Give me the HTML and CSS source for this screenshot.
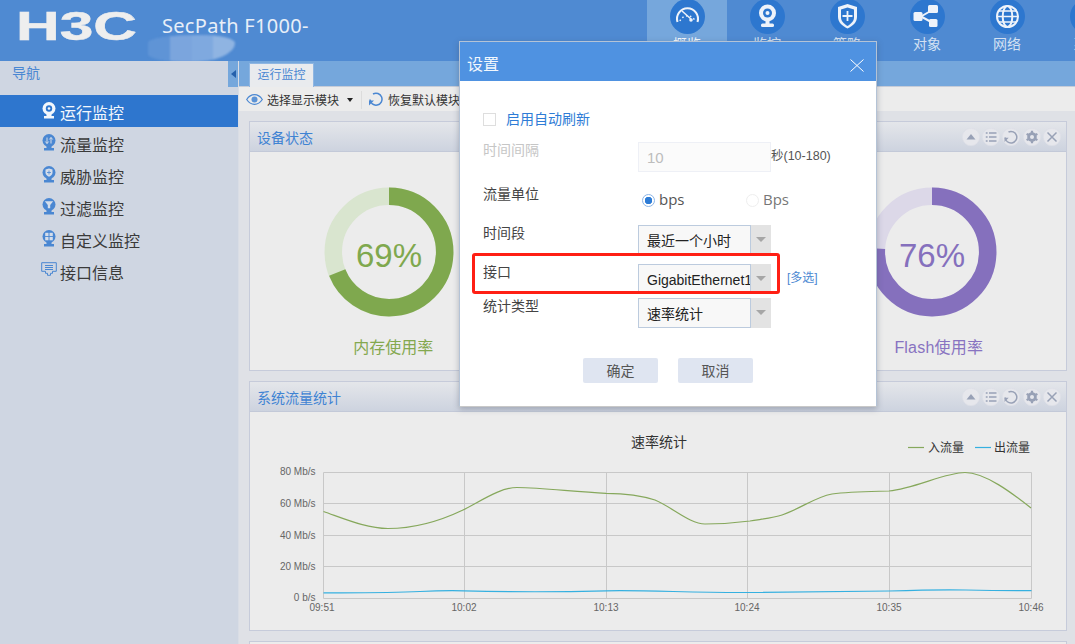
FILE: index.html
```html
<!DOCTYPE html>
<html lang="zh-CN">
<head>
<meta charset="utf-8">
<title>SecPath F1000</title>
<link rel="stylesheet" href="styles.css">
</head>
<body>
<div class="app">
  <header class="top">
    <div class="brand">
      <svg class="logo" viewBox="0 0 117 29" role="img" aria-label="H3C"><text x="-3" y="28" textLength="121" lengthAdjust="spacingAndGlyphs" class="logo-text">H3C</text></svg>
      <span class="product">SecPath F1000-</span>
      <div class="smudge"><i></i><i></i><i></i><i></i></div>
    </div>
    <nav class="mainnav">
      <a class="navitem active">
        <svg class="navicon" viewBox="0 0 35 35"><circle cx="17.5" cy="17.5" r="17.5" class="disc"/><path d="M7.500 23a10.500 10.500 0 1 1 20 0" class="ln"/><path d="M10 22a8 8 0 0 1 15 0" class="ln thin dashed"/><path d="M12 12l9 8" class="ln thin"/><circle cx="21" cy="21" r="1.800" class="dot"/></svg>
        <span>概览</span>
      </a>
      <a class="navitem">
        <svg class="navicon" viewBox="0 0 35 35"><circle cx="17.5" cy="17.5" r="17.5" class="disc"/><circle cx="17.5" cy="14" r="8.500" class="dot"/><circle cx="17.5" cy="14" r="4.500" class="hole"/><circle cx="17.5" cy="14" r="2" class="dot"/><rect x="11" y="24.500" width="13" height="3.500" rx="1.500" class="dot"/><rect x="15.500" y="21" width="4" height="4" class="dot"/></svg>
        <span>监控</span>
      </a>
      <a class="navitem">
        <svg class="navicon" viewBox="0 0 35 35"><circle cx="17.5" cy="17.5" r="17.5" class="disc"/><path d="M17.500 5l9.500 3v10c0 5-4 9-9.500 11.500C12 27 8 23 8 18V8z" class="dot"/><path d="M17.500 8.500l6.500 2v8c0 3.500-3 6.500-6.500 8.500-3.500-2-6.500-5-6.500-8.500v-8z" class="hole"/><path d="M17.500 12v10M12.500 17h10" class="ln plus"/></svg>
        <span>策略</span>
      </a>
      <a class="navitem">
        <svg class="navicon" viewBox="0 0 35 35"><circle cx="17.5" cy="17.5" r="17.500" class="disc"/><path d="M11 17.500L24 10M11 17.500l13 7" class="ln"/><rect x="3.500" y="13" width="9" height="9" rx="1.500" class="dot"/><rect x="18" y="6" width="10" height="8" rx="1.500" class="dot"/><rect x="19" y="20" width="8.500" height="8" rx="1.500" class="dot"/></svg>
        <span>对象</span>
      </a>
      <a class="navitem">
        <svg class="navicon" viewBox="0 0 35 35"><circle cx="17.5" cy="17.5" r="17.500" class="disc"/><circle cx="17.500" cy="17.500" r="10.500" class="ln"/><ellipse cx="17.500" cy="17.500" rx="4.800" ry="10.500" class="ln"/><path d="M7 17.500h21M8.800 12h17.400M8.800 23h17.400" class="ln thin"/></svg>
        <span>网络</span>
      </a>
      <a class="navitem">
        <svg class="navicon" viewBox="0 0 35 35"><circle cx="17.5" cy="17.5" r="17.500" class="disc"/></svg>
        <span>系统</span>
      </a>
    </nav>
  </header>

  <div class="workspace">
    <aside class="side">
      <div class="side-head">
        <span>导航</span>
        <button class="collapse" aria-label="收起"><i></i></button>
      </div>
      <ul class="menu">
        <li class="menu-item current">
          <svg class="mi" viewBox="0 0 14 17"><circle cx="7" cy="6.500" r="6.500" class="mi-fill"/><circle cx="7" cy="6.500" r="3.200" class="mi-hole"/><circle cx="7" cy="6.500" r="1.300" class="mi-fill"/><rect x="2" y="14" width="10" height="2.500" class="mi-fill"/><rect x="4.500" y="12" width="5" height="3" class="mi-fill"/></svg>
          运行监控</li>
        <li class="menu-item">
          <svg class="mi" viewBox="0 0 14 17"><circle cx="7" cy="6.500" r="6.500" class="mi-fill"/><path d="M5 3.500v6M3.300 7.500L5 9.500l1.700-2M9 9.500v-6M7.300 5.500L9 3.500l1.700 2" class="mi-line"/><rect x="2" y="14" width="10" height="2.500" class="mi-fill"/><rect x="4.500" y="12" width="5" height="3" class="mi-fill"/></svg>
          流量监控</li>
        <li class="menu-item">
          <svg class="mi" viewBox="0 0 14 17"><circle cx="7" cy="6.500" r="6.500" class="mi-fill"/><path d="M7 2.500l3.500 1v3.200c0 1.800-1.500 3-3.500 4-2-1-3.500-2.200-3.500-4V3.500z" class="mi-hole"/><path d="M7 4.500v4M5 6.500h4" class="mi-fine"/><rect x="2" y="14" width="10" height="2.500" class="mi-fill"/><rect x="4.500" y="12" width="5" height="3" class="mi-fill"/></svg>
          威胁监控</li>
        <li class="menu-item">
          <svg class="mi" viewBox="0 0 14 17"><circle cx="7" cy="6.500" r="6.500" class="mi-fill"/><path d="M2.800 3.300h8.400L8.200 7v3.200H5.800V7z" class="mi-hole"/><rect x="2" y="14" width="10" height="2.500" class="mi-fill"/><rect x="4.500" y="12" width="5" height="3" class="mi-fill"/></svg>
          过滤监控</li>
        <li class="menu-item">
          <svg class="mi" viewBox="0 0 14 17"><circle cx="7" cy="6.500" r="6.500" class="mi-fill"/><rect x="3.200" y="2.800" width="3.300" height="3.300" class="mi-hole"/><rect x="7.500" y="2.800" width="3.300" height="3.300" class="mi-hole"/><rect x="3.200" y="7" width="3.300" height="3.300" class="mi-hole"/><rect x="7.500" y="7" width="3.300" height="3.300" class="mi-hole"/><rect x="2" y="14" width="10" height="2.500" class="mi-fill"/><rect x="4.500" y="12" width="5" height="3" class="mi-fill"/></svg>
          自定义监控</li>
        <li class="menu-item">
          <svg class="mi wide" viewBox="0 0 16 14"><path d="M.7.700h14.600v8.600h-3.800v2h-2v2h-3v-2h-2v-2H.7z" class="mi-outline"/><path d="M4 3.500h8M4 5.500h8M4 7.500h8" class="mi-outline"/></svg>
          接口信息</li>
      </ul>
    </aside>

    <main class="content">
      <div class="tabs"><span class="tab">运行监控</span></div>
      <div class="toolbar">
        <svg class="tool-eye" viewBox="0 0 17 11"><path d="M.7 5.500C3 2 5.500.7 8.500.7s5.500 1.300 7.800 4.800c-2.300 3.500-4.800 4.800-7.800 4.800S3 9 .7 5.500z" class="eye-line"/><circle cx="8.500" cy="5.500" r="3" class="eye-fill"/></svg>
        <span class="tool-text">选择显示模块</span>
        <i class="caret"></i>
        <i class="tool-sep"></i>
        <svg class="tool-redo" viewBox="0 0 15 15"><path d="M5 2A6 6 0 1 1 2 7.500" class="redo-line"/><path d="M1 13.500V8.500h5z" class="redo-fill"/></svg>
        <span class="tool-text">恢复默认模块</span>
      </div>
      <div class="panels">
        <section class="panel">
          <div class="panel-head">
            <h2>设备状态</h2>
            <div class="panel-tools">
              <svg class="pt" viewBox="0 0 18 18"><circle cx="9" cy="9" r="8.700" class="pt-bg"/><path d="M4.500 11.500L9 6l4.500 5.500z" class="pt-fill"/></svg>
              <svg class="pt" viewBox="0 0 18 18"><circle cx="9" cy="9" r="8.700" class="pt-bg"/><path d="M7 5h7.500M7 9h7.500M7 13h7.500M3.800 5h1.800M3.800 9h1.800M3.800 13h1.800" class="pt-line"/></svg>
              <svg class="pt" viewBox="0 0 18 18"><circle cx="9" cy="9" r="8.700" class="pt-bg"/><path d="M6.500 4a5.800 5.800 0 1 1-3.300 5.500" class="pt-line"/><path d="M2.500 14V9.800h4.200z" class="pt-fill"/></svg>
              <svg class="pt" viewBox="0 0 18 18"><circle cx="9" cy="9" r="8.700" class="pt-bg"/><circle cx="9" cy="9" r="4.800" class="pt-gear"/><path d="M9 2.800v12.400M3.600 5.900l10.800 6.200M14.400 5.900L3.600 12.100" class="pt-teeth"/><circle cx="9" cy="9" r="2" class="pt-bgdot"/></svg>
              <svg class="pt" viewBox="0 0 18 18"><circle cx="9" cy="9" r="8.700" class="pt-bg"/><path d="M4.500 4.500l9 9M13.500 4.500l-9 9" class="pt-line"/></svg>
            </div>
          </div>
          <div class="gauges">
            <figure class="gauge gauge-green">
              <svg class="ring" viewBox="0 0 130 130"><circle cx="65" cy="65" r="55.700" class="ring-track"/><circle cx="65" cy="65" r="55.700" class="ring-value" pathLength="100" stroke-dasharray="69 31"/><text x="65" y="80" class="ring-text">69%</text></svg>
              <figcaption>内存使用率</figcaption>
            </figure>
            <figure class="gauge gauge-purple">
              <svg class="ring" viewBox="0 0 130 130"><circle cx="65" cy="65" r="55.700" class="ring-track"/><circle cx="65" cy="65" r="55.700" class="ring-value" pathLength="100" stroke-dasharray="76 24"/><text x="65" y="80" class="ring-text">76%</text></svg>
              <figcaption>Flash使用率</figcaption>
            </figure>
          </div>
        </section>

        <section class="panel">
          <div class="panel-head">
            <h2>系统流量统计</h2>
            <div class="panel-tools">
              <svg class="pt" viewBox="0 0 18 18"><circle cx="9" cy="9" r="8.700" class="pt-bg"/><path d="M4.500 11.500L9 6l4.500 5.500z" class="pt-fill"/></svg>
              <svg class="pt" viewBox="0 0 18 18"><circle cx="9" cy="9" r="8.700" class="pt-bg"/><path d="M7 5h7.500M7 9h7.500M7 13h7.500M3.800 5h1.800M3.800 9h1.800M3.800 13h1.800" class="pt-line"/></svg>
              <svg class="pt" viewBox="0 0 18 18"><circle cx="9" cy="9" r="8.700" class="pt-bg"/><path d="M6.500 4a5.800 5.800 0 1 1-3.300 5.500" class="pt-line"/><path d="M2.500 14V9.800h4.200z" class="pt-fill"/></svg>
              <svg class="pt" viewBox="0 0 18 18"><circle cx="9" cy="9" r="8.700" class="pt-bg"/><circle cx="9" cy="9" r="4.800" class="pt-gear"/><path d="M9 2.800v12.400M3.600 5.900l10.800 6.200M14.400 5.900L3.600 12.100" class="pt-teeth"/><circle cx="9" cy="9" r="2" class="pt-bgdot"/></svg>
              <svg class="pt" viewBox="0 0 18 18"><circle cx="9" cy="9" r="8.700" class="pt-bg"/><path d="M4.500 4.500l9 9M13.500 4.500l-9 9" class="pt-line"/></svg>
            </div>
          </div>
          <svg class="chart" viewBox="250 412 816 218">
            <text x="659" y="447" class="c-title">速率统计</text>
            <path d="M908 447.500h16" class="c-green"/><text x="928" y="452" class="c-legend">入流量</text>
            <path d="M975 447.500h16" class="c-blue"/><text x="994" y="452" class="c-legend">出流量</text>
            <path d="M323.500 472.500H1031.500V598.500H323.500zM323.500 503.500H1031.500M323.500 535.500H1031.500M323.500 566.500H1031.500M464.500 472.500V598.500M606.500 472.500V598.500M747.500 472.500V598.500M889.500 472.500V598.500" class="c-grid"/>
            <path d="M323.500 511.500C345 519 367 528.500 388 528.500C415 528.500 440 521 463 510C481 501 500 487.500 517 487.500C545 488 575 492 606 493.300C625 493.500 640 495 655 500C672 507 690 524 705 524C722 524 735 523 750 521C762 519 773 518 782 515C800 509 815 497 832 494C850 491.500 870 491.500 889 491C915 488.500 945 472.500 965 472.500C985 472.500 1012 493 1031 508" class="c-green"/>
            <path d="M323.500 592.800C370 592.800 390 593 420 591.500C440 590.500 450 590.500 464 590.800C510 592 560 592 606 590.800C650 590 690 592.800 747 592.500C800 592 850 591.500 889 591C920 590 945 589.500 966 590C990 590.500 1010 590.700 1031.500 590.700" class="c-blue"/>
            <g class="c-axis">
              <text x="315.500" y="475">80 Mb/s</text>
              <text x="315.500" y="506.500">60 Mb/s</text>
              <text x="315.500" y="538.500">40 Mb/s</text>
              <text x="315.500" y="569.500">20 Mb/s</text>
              <text x="315.500" y="601">0 b/s</text>
            </g>
            <g class="c-times">
              <text x="322" y="611">09:51</text>
              <text x="464" y="611">10:02</text>
              <text x="606" y="611">10:13</text>
              <text x="747" y="611">10:24</text>
              <text x="889" y="611">10:35</text>
              <text x="1031" y="611">10:46</text>
            </g>
          </svg>
        </section>
        <section class="panel panel-next"></section>
      </div>
    </main>
  </div>

  <div class="dialog" role="dialog" aria-label="设置">
    <div class="dialog-head">
      <span>设置</span>
      <svg class="dialog-x" viewBox="0 0 14 13"><path d="M.5.500l13 12M13.500.500l-13 12"/></svg>
    </div>
    <form class="dialog-body">
      <label class="check-row"><i class="check"></i><span class="check-text">启用自动刷新</span></label>
      <div class="row row-interval">
        <span class="lab disabled">时间间隔</span>
        <span class="input">10</span>
        <span class="unit">秒(10-180)</span>
      </div>
      <div class="row row-unit">
        <span class="lab">流量单位</span>
        <div class="radios">
          <span class="radio-item on"><i class="radio"></i>bps</span>
          <span class="radio-item"><i class="radio"></i>Bps</span>
        </div>
      </div>
      <div class="row row-time">
        <span class="lab">时间段</span>
        <div class="select"><span class="sel-text">最近一个小时</span><i class="sel-btn"></i></div>
      </div>
      <div class="row row-iface">
        <span class="lab">接口</span>
        <div class="select"><span class="sel-text">GigabitEthernet1/0/1</span><i class="sel-btn"></i></div>
        <a class="multi">[多选]</a>
      </div>
      <div class="row row-kind">
        <span class="lab">统计类型</span>
        <div class="select"><span class="sel-text">速率统计</span><i class="sel-btn"></i></div>
      </div>
      <div class="actions">
        <span class="btn">确定</span>
        <span class="btn">取消</span>
      </div>
    </form>
    <div class="highlight"></div>
  </div>
</div>
</body>
</html>
```

FILE: styles.css
```css
* { box-sizing: border-box; }
html, body { margin: 0; padding: 0; }
body {
  width: 1075px;
  height: 644px;
  overflow: hidden;
  font-family: "Liberation Sans", "Noto Sans CJK SC", sans-serif;
  background: #dfe1e6;
  color: #333;
}
.app { position: relative; width: 1075px; height: 644px; overflow: hidden; }

/* header */
.top { display: flex; height: 61px; background: #4f8ad2; overflow: hidden; }
.brand { position: relative; flex: none; width: 647px; display: flex; align-items: flex-start; padding: 12px 0 0 19px; }
.logo { width: 117px; height: 29px; flex: none; overflow: visible; }
.logo-text { font-family: "Liberation Sans", sans-serif; font-weight: 700; font-size: 41px; fill: #eeeeee; stroke: #eeeeee; stroke-width: .5; }
.product { margin: 0 0 0 26px; font-family: "Noto Sans", sans-serif; font-size: 20px; line-height: 28px; color: #e8eff8; letter-spacing: .3px; }
.smudge { position: absolute; left: 148px; top: 35px; width: 87px; height: 27px; display: flex; align-items: stretch; background: #6f9fda; border-radius: 60% 40% 50% 50% / 30% 30% 70% 30%; filter: blur(1px); overflow: hidden; }
.smudge i { flex: 1; }
.smudge i:nth-child(1) { background: #5f94d6; }
.smudge i:nth-child(2) { background: #7ba5dd; }
.smudge i:nth-child(3) { background: #7fa9df; }
.smudge i:nth-child(4) { background: #8fb4e2; }
.mainnav { flex: none; display: flex; }
.navitem { flex: none; width: 80px; height: 61px; display: flex; flex-direction: column; align-items: center; color: #d3e1f2; font-size: 14px; line-height: 20px; }
.navitem.active { background: #76a7dc; color: #f4f8fc; }
.navicon { width: 35px; height: 35px; margin-top: -1px; flex: none; }
.disc { fill: #2d77cf; }
.dot { fill: #eef3fa; }
.hole { fill: #2d77cf; }
.ln { fill: none; stroke: #eef3fa; stroke-width: 2; }
.ln.thin { stroke-width: 1.500; }
.ln.dashed { stroke-dasharray: 1.500 2.500; }
.ln.plus { stroke: #eef3fa; stroke-width: 1.800; }

/* layout */
.workspace { display: flex; height: 583px; }
.side { flex: none; width: 239px; background: #cfd6e2; border-right: 1px solid #d9dde5; }
.side-head { display: flex; align-items: flex-start; justify-content: space-between; height: 26px; font-size: 14px; line-height: 24px; color: #4a87d2; padding-left: 12px; background: #cfd6e2; }
.collapse { width: 10px; height: 26px; padding: 0; border: 0; background: #75a7dc; display: flex; align-items: center; justify-content: center; }
.collapse i { width: 0; height: 0; border: 4px solid transparent; border-left-width: 0; border-right: 5px solid #2460ab; }
.menu { list-style: none; margin: 8px 0 0; padding: 0; }
.menu-item { display: flex; align-items: center; height: 32px; padding: 1px 0 0 42px; font-size: 16px; color: #3a3a3a; }
.menu-item.current { background: #2e76ce; color: #f3f7fc; }
.mi { width: 14px; height: 17px; margin-right: 4px; flex: none; margin-top: -3px; }
.mi.wide { width: 16px; height: 14px; margin-left: -1px; margin-right: 3px; margin-top: -6px; }
.mi-fill { fill: #4a87d2; }
.mi-hole { fill: #d6deea; }
.mi-line { fill: none; stroke: #d6deea; stroke-width: 1; }
.mi-fine { fill: none; stroke: #4a87d2; stroke-width: .8; }
.mi-outline { fill: none; stroke: #4a87d2; stroke-width: 1; }
.current .mi-fill { fill: #f3f7fc; }
.current .mi-hole { fill: #2e76ce; }

.content { flex: 1; min-width: 0; display: flex; flex-direction: column; overflow: hidden; }
.tabs { flex: none; height: 26px; background: #75a7dc; padding: 2px 0 0 10px; border-bottom: 1px solid #c6ccd8; }
.tab { display: block; width: 65px; height: 24px; background: #e9ebee; border: 1px solid #8fb6e2; border-bottom: 0; color: #4a87d2; font-size: 12px; line-height: 22px; text-align: center; }
.toolbar { flex: none; display: flex; align-items: center; height: 24px; background: #ececec; padding: 1px 0 0 7px; font-size: 12px; color: #333; }
.tool-eye { width: 17px; height: 11px; margin-right: 4px; }
.eye-line { fill: none; stroke: #4a87d2; stroke-width: 1.200; }
.eye-fill { fill: #5b93d6; }
.caret { width: 0; height: 0; margin: 1px 0 0 8px; border: 3px solid transparent; border-bottom: 0; border-top: 4px solid #222; }
.tool-sep { width: 1px; height: 18px; background: #dcdcdc; margin: 0 6px 0 8px; }
.tool-redo { width: 15px; height: 15px; margin-right: 5px; }
.redo-line { fill: none; stroke: #4a87d2; stroke-width: 1.500; }
.redo-fill { fill: #4a87d2; }

.panels { flex: none; padding: 10px 8px 0 10px; display: flex; flex-direction: column; gap: 10px; }
.panel { flex: none; height: 250px; border: 1px solid #c6cbda; background: #ececec; }
.panel-next { height: 30px; }
.panel-head { display: flex; align-items: center; justify-content: space-between; height: 30px; padding: 0 5px 0 7px; border-bottom: 1px solid #c3c9d8; background: linear-gradient(#e4e6ea, #cdd3df); }
.panel-head h2 { margin: 0; font-size: 14px; font-weight: 400; color: #3f83d3; }
.panel-tools { display: flex; gap: 2.300px; }
.pt { width: 18px; height: 18px; flex: none; }
.pt-bg { fill: #e6e7ec; stroke: #dcdee6; stroke-width: .6; }
.pt-fill { fill: #98a1b6; }
.pt-line { fill: none; stroke: #98a1b6; stroke-width: 1.500; }
.pt-gear { fill: #98a1b6; }
.pt-teeth { fill: none; stroke: #98a1b6; stroke-width: 2.200; }
.pt-bgdot { fill: #e6e7ec; }

.gauges { display: grid; grid-template-columns: 271.300px 271.300px 271.300px; padding: 34.700px 0 0 3.500px; }
.gauge { margin: 0; display: flex; flex-direction: column; align-items: center; }
.gauge-purple { grid-column: 3; }
.ring { width: 130px; height: 130px; display: block; }
.ring-track, .ring-value { fill: none; stroke-width: 17.500; }
.ring-value { transform: rotate(-90deg); transform-origin: 65px 65px; }
.ring-text { font-size: 33px; text-anchor: middle; }
.gauge figcaption { margin-top: 21px; font-size: 16px; line-height: 20px; }
.gauge-green figcaption { padding-left: 8px; color: #84a84f; }
.gauge-purple figcaption { padding-left: 14px; letter-spacing: .2px; color: #8873c1; }
.gauge-green .ring-track { stroke: #d9e5cf; }
.gauge-green .ring-value { stroke: #7fa84e; }
.gauge-green .ring-text { fill: #7fa84e; }
.gauge-purple .ring-track { stroke: #dcd8e8; }
.gauge-purple .ring-value { stroke: #8570bd; }
.gauge-purple .ring-text { fill: #8570bd; }

.chart { display: block; width: 816px; height: 218px; }
.c-title { font-size: 14px; text-anchor: middle; fill: #333; }
.c-legend { font-size: 12px; fill: #333; }
.c-grid { fill: none; stroke: #c8c8c8; stroke-width: 1; }
.c-green { fill: none; stroke: #86a85c; stroke-width: 1.200; }
.c-blue { fill: none; stroke: #35b0e0; stroke-width: 1.200; }
.c-axis text { font-size: 10px; fill: #666; text-anchor: end; }
.c-times text { font-size: 10px; fill: #666; text-anchor: middle; }

/* dialog */
.dialog { position: absolute; left: 459px; top: 41px; width: 418px; height: 366px; background: #fff; border: 1px solid #b4c3d6; border-bottom-color: #c8c8c8; box-shadow: 0 2px 6px rgba(60, 70, 90, .35); }
.dialog-head { display: flex; align-items: center; justify-content: space-between; height: 39px; padding: 3px 12px 0 7px; background: #4f92e1; color: #f2f7fd; font-size: 16px; }
.dialog-x { width: 14px; height: 13px; margin-top: 5px; }
.dialog-x path { fill: none; stroke: #fff; stroke-width: 1; }
.dialog-body { display: block; padding: 27px 0 0 23px; font-size: 14px; }
.check-row { display: flex; align-items: center; height: 21px; margin-bottom: 13px; color: #2e7cd6; }
.check { width: 13px; height: 13px; border: 1px solid #dedede; margin: 2px 10px 0 0; background: #fff; }
.check-text { margin-top: -2px; }
.row { display: flex; align-items: flex-start; }
.row-interval { height: 44px; }
.row-unit { height: 39px; }
.row-time { height: 39px; }
.row-iface { height: 34px; }
.row-kind { height: 60px; }
.lab { flex: none; width: 155px; margin-top: -2px; line-height: 20px; color: #444; }
.lab.disabled { color: #c6c6c6; }
.input { flex: none; width: 133px; height: 30px; border: 1px solid #eef0f6; background: #fbfbfb; color: #bdbdbd; font-size: 15px; line-height: 29px; padding-left: 8px; }
.unit { margin-top: 5px; font-size: 12.500px; line-height: 18px; color: #555; }
.radios { display: flex; height: 26px; align-items: center; padding-left: 4px; font-family: "Open Sans", sans-serif; font-size: 15px; }
.radio-item { display: flex; align-items: center; width: 104px; color: #777; }
.radio-item.on { color: #555; }
.radio { width: 13px; height: 13px; border-radius: 50%; border: 1px solid #eeeeee; background: #fff; margin: 2px 4px 0 0; }
.on .radio { border-color: #8db6e8; background: radial-gradient(circle, #2e7cd6 0 3.500px, #fff 4px); }
.select { flex: none; display: flex; width: 133px; height: 30px; }
.sel-text { flex: none; width: 113px; border: 1px solid #bccbde; background: #f8f8f8; color: #222; line-height: 30px; padding-left: 8px; overflow: hidden; white-space: nowrap; }
.sel-btn { flex: none; width: 20px; background: #e3e3e3; position: relative; }
.sel-btn::after { content: ""; position: absolute; left: 5px; top: 12px; border: 5px solid transparent; border-bottom: 0; border-top: 5px solid #a6a6a6; }
.multi { margin: 6px 0 0 16px; font-size: 12px; line-height: 16px; color: #4a87d2; }
.actions { display: flex; gap: 20px; padding-left: 100px; }
.btn { display: block; width: 75px; height: 25px; background: #dfe5f1; color: #555; text-align: center; line-height: 26px; border-radius: 2px; }
.highlight { position: absolute; left: 12px; top: 211px; width: 308px; height: 41px; border: 3px solid #ff1f14; border-radius: 3px; }
```
